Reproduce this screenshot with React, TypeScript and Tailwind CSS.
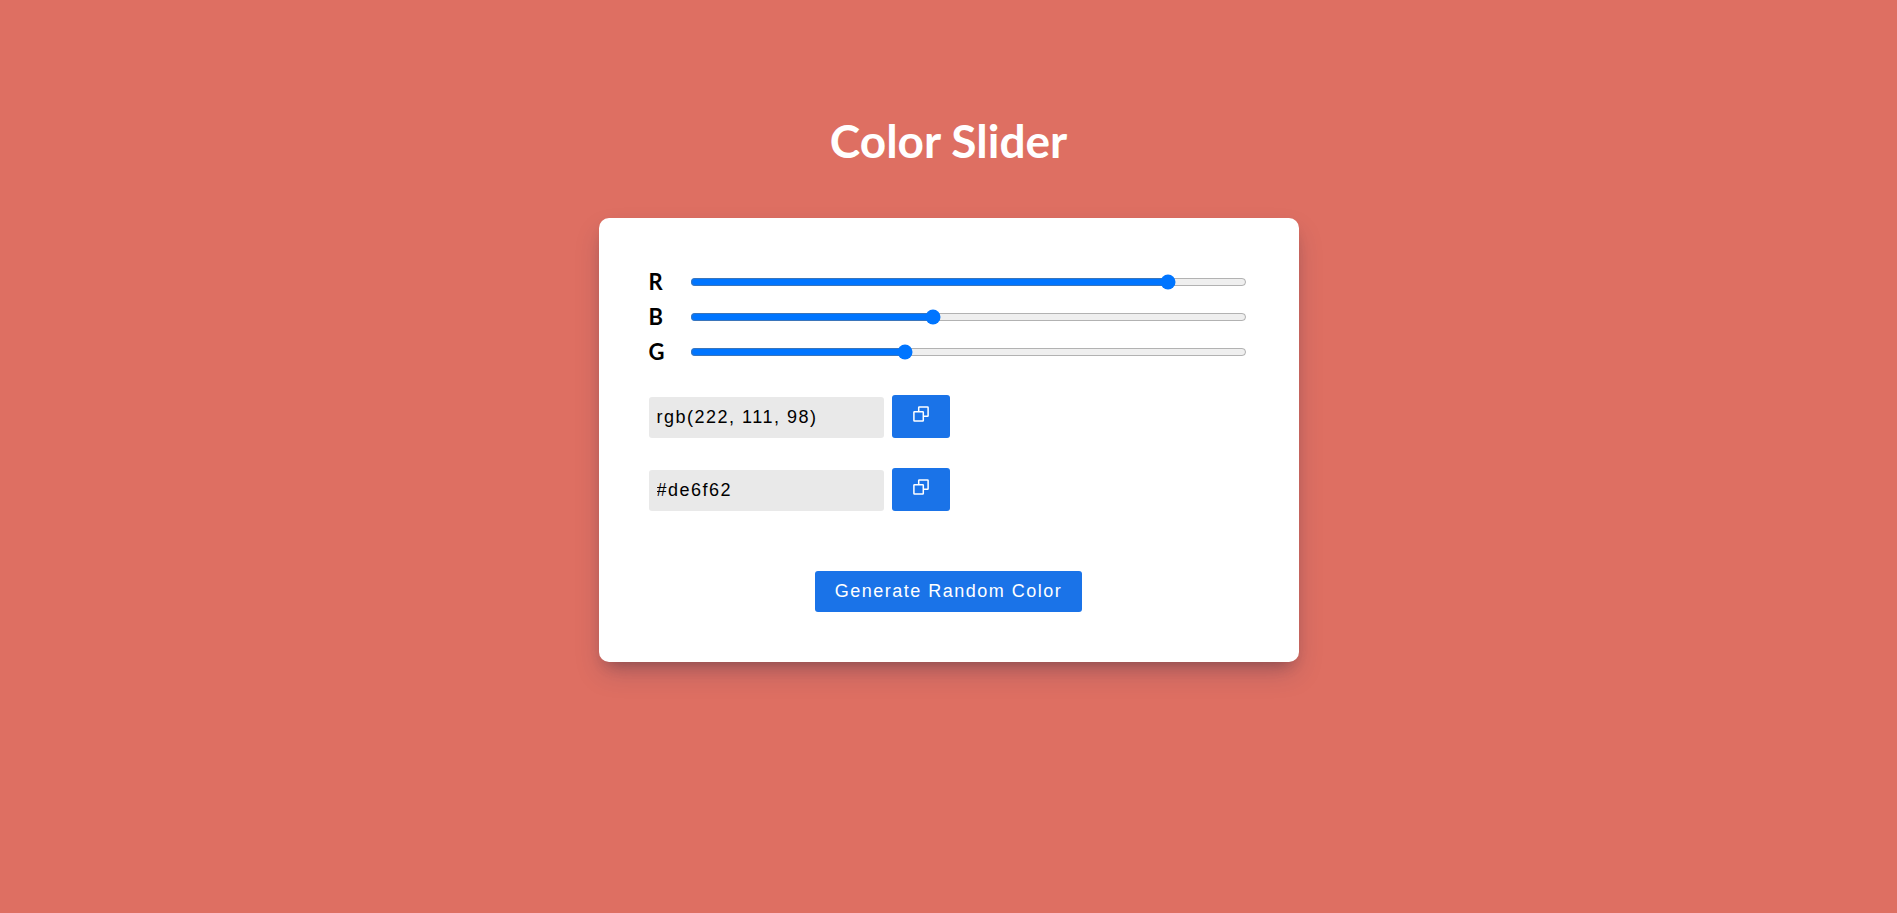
import { useState } from "react";

type Channel = "r" | "g" | "b";

const rows: { key: Channel; label: string }[] = [
  { key: "r", label: "R" },
  { key: "g", label: "B" },
  { key: "b", label: "G" },
];

function CopyIcon() {
  return (
    <svg viewBox="0 0 16 16" className="size-4" fill="none" stroke="currentColor" strokeWidth="1.5" strokeLinejoin="round" aria-hidden="true">
      <rect x="0.9" y="5.7" width="9.4" height="9.4" rx="0.6" />
      <path d="M5.7 5.7V1.5a.6.6 0 0 1 .6-.6h8.2a.6.6 0 0 1 .6.6v8.2a.6.6 0 0 1-.6.6h-4.2" />
    </svg>
  );
}

function CopyField({ label, value }: { label: string; value: string }) {
  return (
    <div className="flex items-end gap-2">
      <input
        type="text"
        readOnly
        aria-label={label}
        value={value}
        className="h-[41px] w-[235px] rounded-[3px] bg-[#e9e9e9] px-2 text-lg tracking-[1.5px] text-black outline-none"
      />
      <button
        type="button"
        aria-label={`Copy ${label}`}
        onClick={() => navigator.clipboard?.writeText(value)}
        className="flex h-[43px] w-[58px] cursor-pointer justify-center rounded-[3px] bg-[#1a73e8] pt-[11px] text-white"
      >
        <CopyIcon />
      </button>
    </div>
  );
}

export default function App() {
  const [color, setColor] = useState({ r: 222, g: 111, b: 98 });
  const rgb = `rgb(${color.r}, ${color.g}, ${color.b})`;
  const hex = "#" + [color.r, color.g, color.b].map((n) => n.toString(16).padStart(2, "0")).join("");
  const random = () => Math.floor(Math.random() * 256);

  return (
    <main
      className="flex min-h-screen flex-col items-center px-4 pt-28 font-['Liberation_Sans',Arial,sans-serif]"
      style={{ backgroundColor: rgb }}
    >
      <h1 className="font-['Lato',sans-serif] text-[46px] leading-[58px] font-bold text-white">Color Slider</h1>
      <section className="mt-12 w-full max-w-[700px] rounded-[10px] bg-white px-[50px] pt-[46px] pb-[50px] shadow-[0_13px_27px_-4px_rgba(50,50,93,0.28),0_8px_16px_-8px_rgba(0,0,0,0.3)]">
        <div>
          {rows.map(({ key, label }) => (
            <div key={key} className="flex h-[35px] items-center pr-0.5">
              <label htmlFor={key} className="w-[41px] font-['Lato',sans-serif] text-[22px] leading-7 font-bold text-black">
                {label}
              </label>
              <input
                id={key}
                type="range"
                min={0}
                max={255}
                value={color[key]}
                onChange={(e) => setColor({ ...color, [key]: Number(e.target.value) })}
                className="h-4 min-w-0 flex-1"
              />
            </div>
          ))}
        </div>
        <div className="mt-[26px] flex flex-col gap-[30px]">
          <CopyField label="RGB color" value={rgb} />
          <CopyField label="Hex color" value={hex} />
        </div>
        <div className="mt-[60px] flex justify-center">
          <button
            type="button"
            onClick={() => setColor({ r: random(), g: random(), b: random() })}
            className="h-[41px] cursor-pointer rounded-[3px] bg-[#1a73e8] px-5 pb-0.5 text-lg tracking-[1.5px] text-white"
          >
            Generate Random Color
          </button>
        </div>
      </section>
    </main>
  );
}
